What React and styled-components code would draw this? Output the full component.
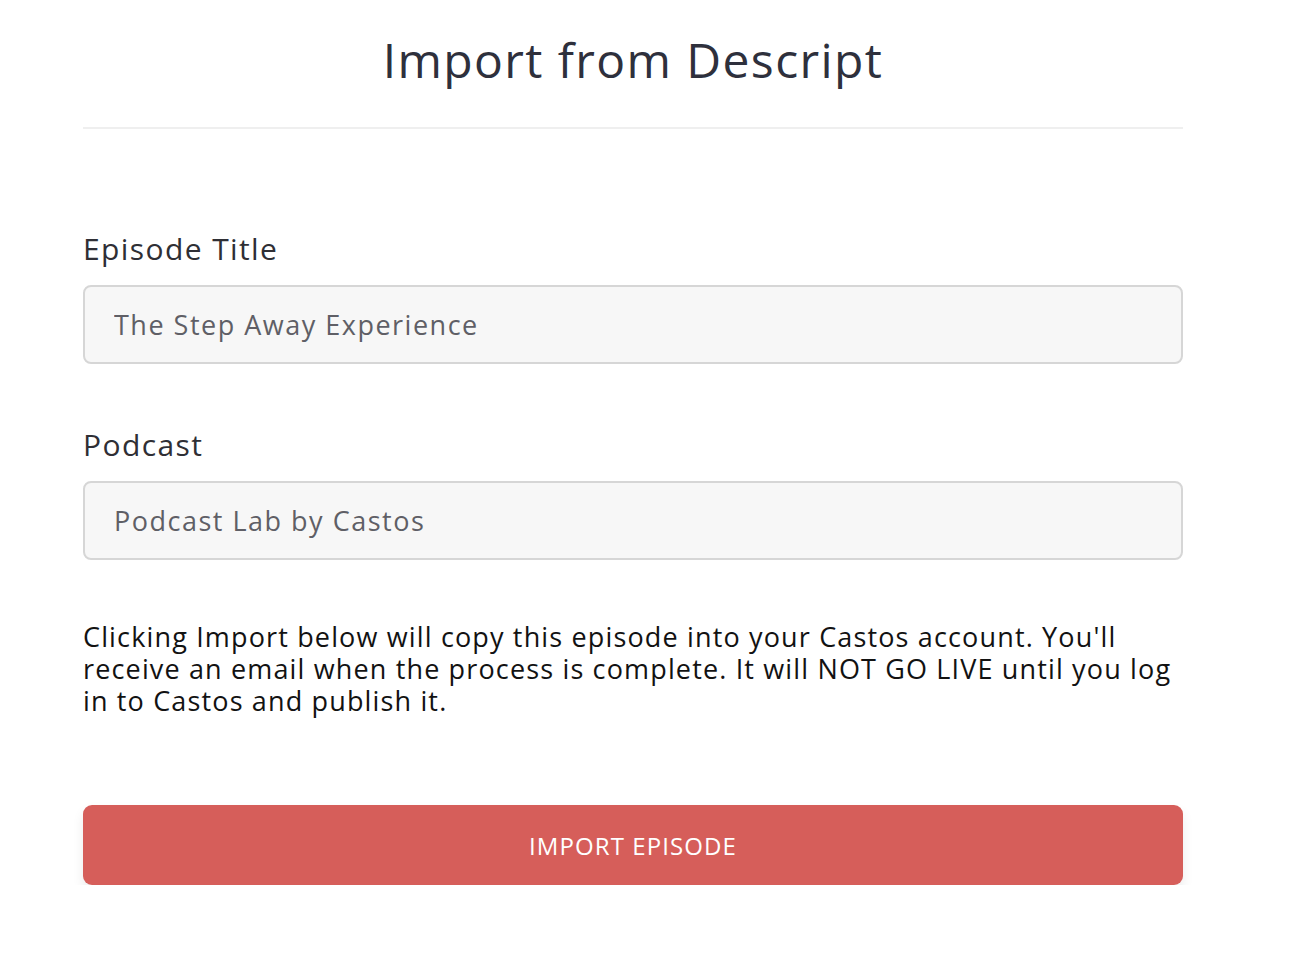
import React from "react";
import styled, { createGlobalStyle } from "styled-components";

const Global = createGlobalStyle`
  html, body { margin: 0; padding: 0; background: #ffffff; }
  body { font-family: "Open Sans", "Noto Sans", sans-serif; }
  * { box-sizing: border-box; }
`;

const Page = styled.div`
  width: 1100px;
  margin: 0 0 0 83px;
  padding-top: 28px;
`;

const Header = styled.header`
  border-bottom: 2px solid #efefef;
  padding-bottom: 35px;
  text-align: center;
`;

const Title = styled.h1`
  margin: 0;
  font-family: "Open Sans", sans-serif;
  font-weight: 400;
  font-size: 48px;
  letter-spacing: 1.4px;
  line-height: 64px;
  color: #2e303c;
`;

const Form = styled.form`
  display: flex;
  flex-direction: column;
  padding-top: 100px;
`;

const Field = styled.div`
  display: flex;
  flex-direction: column;
  gap: 16px;
  margin-bottom: 61px;
`;

const Label = styled.label`
  font-size: 30px;
  letter-spacing: 1.4px;
  line-height: 40px;
  color: #2f2f35;
`;

const Input = styled.input`
  height: 79px;
  width: 100%;
  padding: 0 29px;
  border: 2px solid #d6d6d6;
  border-radius: 8px;
  background: #f7f7f7;
  font-family: "Open Sans", sans-serif;
  font-size: 27px;
  letter-spacing: 1.5px;
  color: #5f5f66;
  outline: none;
`;

const Note = styled.p`
  margin: 0 0 88px;
  font-size: 27px;
  letter-spacing: 1.15px;
  line-height: 32px;
  color: #121212;
`;

const Button = styled.button`
  height: 80px;
  width: 100%;
  border: none;
  border-radius: 9px;
  background: #d65e5a;
  color: #ffffff;
  font-family: "Open Sans", sans-serif;
  font-weight: 400;
  font-size: 24px;
  letter-spacing: 1.1px;
  box-shadow: 0 6px 12px rgba(0, 0, 0, 0.08);
  cursor: pointer;
`;

export default function App() {
  return (
    <>
      <Global />
      <Page>
        <Header>
          <Title>Import from Descript</Title>
        </Header>
        <Form onSubmit={(e) => e.preventDefault()}>
          <Field>
            <Label htmlFor="title">Episode Title</Label>
            <Input id="title" readOnly value="The Step Away Experience" />
          </Field>
          <Field>
            <Label htmlFor="podcast">Podcast</Label>
            <Input id="podcast" readOnly value="Podcast Lab by Castos" />
          </Field>
          <Note>
            Clicking Import below will copy this episode into your Castos account. You'll
            receive an email when the process is complete. It will NOT GO LIVE until you log
            in to Castos and publish it.
          </Note>
          <Button type="submit">IMPORT EPISODE</Button>
        </Form>
      </Page>
    </>
  );
}
